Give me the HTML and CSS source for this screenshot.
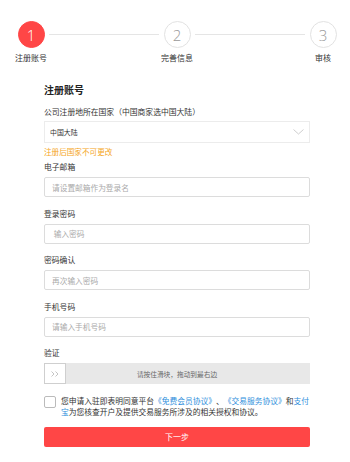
FILE: index.html
```html
<!DOCTYPE html>
<html lang="zh-CN">
<head>
  <meta charset="UTF-8" />
  <title>注册账号</title>
  <link rel="stylesheet" href="styles.css">
</head>
<body>
  <div class="steps">
    <div class="step done">
      <div class="circle">1</div>
      <div class="step-name">注册账号</div>
    </div>
    <div class="line"></div>
    <div class="step">
      <div class="circle">2</div>
      <div class="step-name">完善信息</div>
    </div>
    <div class="line"></div>
    <div class="step">
      <div class="circle">3</div>
      <div class="step-name">审核</div>
    </div>
  </div>

  <div class="form">
    <h2 class="title">注册账号</h2>

    <div class="label">公司注册地所在国家（中国商家选中国大陆）</div>
    <div class="select">
      <span>中国大陆</span>
      <svg class="chevron" width="11" height="6" viewBox="0 0 11 6"><path d="M0.5 0.5 L5.5 5 L10.5 0.5" fill="none" stroke="#c8c8c8" stroke-width="0.9"/></svg>
    </div>
    <div class="tip">注册后国家不可更改</div>

    <div class="label">电子邮箱</div>
    <input class="field" placeholder="请设置邮箱作为登录名">

    <div class="label">登录密码</div>
    <input class="field" placeholder=" 输入密码">

    <div class="label">密码确认</div>
    <input class="field" placeholder="再次输入密码">

    <div class="label">手机号码</div>
    <input class="field" placeholder="请输入手机号码">

    <div class="label">验证</div>
    <div class="slider">
      <div class="handle">
        <svg width="8" height="6" viewBox="0 0 8 6"><path d="M0.5 0.5 L3 3 L0.5 5.5 M4.5 0.5 L7 3 L4.5 5.5" fill="none" stroke="#b5b5b5" stroke-width="0.8"/></svg>
      </div>
      <span class="slider-text">请按住滑块，拖动到最右边</span>
    </div>

    <div class="agree">
      <span class="check"></span>
      <p>您申请入驻即表明同意平台<a>《免费会员协议》</a>、<a>《交易服务协议》</a>和<a>支付</a><a>宝</a>为您核查开户及提供交易服务所涉及的相关授权和协议。</p>
    </div>

    <button class="next">下一步</button>
  </div>
</body>
</html>
```

FILE: styles.css
```css
body {
  margin: 0;
  background: #fff;
  color: #333;
  font-family: "Noto Sans CJK SC", "Noto Sans", sans-serif;
  text-spacing-trim: space-all;
}
.steps {
  display: flex;
  align-items: flex-start;
  padding: 21px 9px 0 13px;
}
.step {
  width: 36px;
  display: flex;
  flex-direction: column;
  align-items: center;
}
.circle {
  width: 25px;
  height: 25px;
  border: 1px solid #e2e2e2;
  border-radius: 50%;
  display: flex;
  align-items: center;
  justify-content: center;
  font-family: "Open Sans", sans-serif;
  font-weight: 300;
  font-size: 15px;
  color: #999;
  background: #fff;
}
.step.done .circle {
  background: #ff4646;
  border-color: #ff4646;
  color: #fff;
}
.step-name {
  margin-top: 4px;
  font-size: 8px;
  line-height: 12px;
  white-space: nowrap;
  color: #333;
}
.line {
  flex: 1;
  height: 1px;
  background: #e5e5e5;
  margin-top: 13px;
}
.form {
  padding: 0 40px 0 44px;
  margin-top: 19px;
}
.title {
  margin: 0;
  font-size: 10px;
  line-height: 14px;
  font-weight: bold;
  color: #222;
}
.label {
  font-size: 7.8px;
  line-height: 12px;
  color: #333;
  margin-bottom: 4px;
}
.title + .label {
  margin-top: 9px;
  margin-bottom: 3px;
}
.select {
  height: 22px;
  box-sizing: border-box;
  border: 1px solid #ececec;
  display: flex;
  align-items: center;
  justify-content: space-between;
  padding: 0 4px 0 5px;
  font-size: 6.9px;
  color: #333;
}
.chevron {
  margin-right: 1px;
}
.tip {
  font-size: 7.6px;
  line-height: 10px;
  color: #f5a623;
  margin: 4px 0 4px;
}
.field {
  display: block;
  width: 100%;
  height: 20px;
  box-sizing: border-box;
  border: 1px solid #dcdcdc;
  border-radius: 2px;
  padding: 0 7px;
  margin: 0 0 10.5px;
  font-family: inherit;
  font-size: 7.7px;
  color: #333;
  outline: none;
}
.field::placeholder {
  color: #aaa;
}
.slider {
  position: relative;
  height: 21px;
  background: #e8e8e8;
  display: flex;
  align-items: center;
  justify-content: center;
}
.handle {
  position: absolute;
  left: 0;
  top: 0;
  width: 22px;
  height: 21px;
  box-sizing: border-box;
  background: #fff;
  border: 1px solid #cfcfcf;
  display: flex;
  align-items: center;
  justify-content: center;
}
.slider-text {
  font-size: 6.7px;
  color: #666;
}
.agree {
  display: flex;
  align-items: flex-start;
  margin-top: 11px;
}
.check {
  flex: none;
  width: 10px;
  height: 10px;
  border: 1px solid #bbb;
  border-radius: 2px;
  margin-top: 1px;
  margin-right: 5px;
}
.agree p {
  margin: 0;
  font-size: 7.75px;
  line-height: 11.3px;
  color: #333;
}
.agree a {
  color: #2f8fdc;
}
.next {
  display: block;
  width: 100%;
  height: 20px;
  margin-top: 9px;
  border: none;
  border-radius: 2px;
  background: #ff4646;
  color: #fff;
  font-family: inherit;
  font-size: 8px;
  cursor: pointer;
}
```
